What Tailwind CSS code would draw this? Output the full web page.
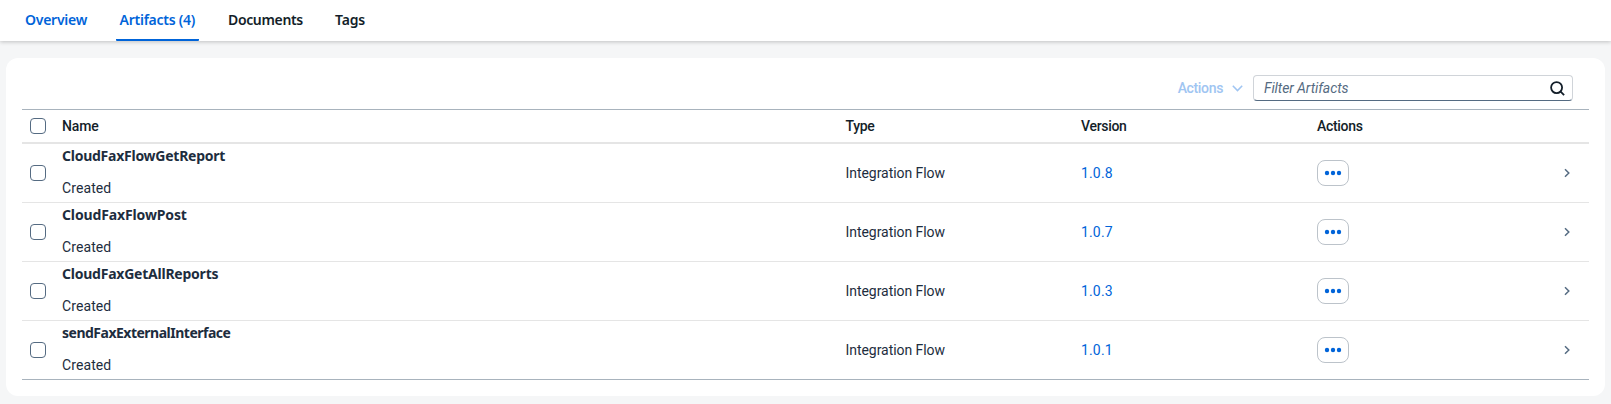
<!DOCTYPE html>
<html lang="en">
<head>
<meta charset="utf-8">
<title>Artifacts</title>
<script src="https://cdn.jsdelivr.net/npm/@tailwindcss/browser@4"></script>
</head>
<body class="h-[404px] overflow-hidden bg-[#f5f6f7] font-[Roboto,sans-serif] text-sm leading-5 text-[#1d2d3e]">
<svg class="hidden">
  <symbol id="dots" viewBox="0 0 18 6"><circle cx="3" cy="3" r="2.2"/><circle cx="9" cy="3" r="2.2"/><circle cx="15" cy="3" r="2.2"/></symbol>
  <symbol id="next" viewBox="0 0 6 10"><path d="M1 1.2 4.8 5 1 8.8" fill="none" stroke="currentColor" stroke-width="1.5"/></symbol>
</svg>
<nav class="relative flex h-[41px] items-stretch bg-white pl-[25px] font-['Noto_Sans',sans-serif] font-semibold shadow-[0_1px_4px_rgba(0,0,0,0.22)]">
  <a class="w-[91px] pt-[10px] tracking-[-0.25px] text-[#0064d9]">Overview</a>
  <a class="w-[83px] rounded-b-[1px] border-b-2 border-[#0064d9] pl-[3.5px] pt-[10px] tracking-[-0.25px] text-[#0064d9]">Artifacts (4)</a>
  <a class="ml-[29px] w-[107px] pt-[10px] tracking-[-0.35px] text-[#131e29]">Documents</a>
  <a class="pt-[10px] tracking-[-0.2px] text-[#131e29]">Tags</a>
</nav>
<main class="mx-[6px] mt-[17px] h-[338px] rounded-xl bg-white px-4">
  <div class="flex h-[51px] items-start justify-end pr-4 pt-[17px]">
    <button class="mr-[10px] mt-[3px] flex items-center gap-[9px] font-medium tracking-[-0.35px] text-[#a0c5f2]"><span>Actions</span>
      <svg class="h-[7px] w-[11px]" viewBox="0 0 11 7"><path d="M.8.8 5.5 5.6 10.2.8" fill="none" stroke="currentColor" stroke-width="1.5"/></svg></button>
    <div class="flex h-[26px] w-80 items-center justify-between rounded border border-[#d0d4d9] border-b-[#556b82] pl-[10px] pr-[7.5px]">
      <span class="italic tracking-[-0.1px] text-[#556b82]">Filter Artifacts</span>
      <svg class="size-[15px] text-[#131e29]" viewBox="0 0 15 15" fill="none" stroke="currentColor" stroke-width="1.8"><circle cx="6.6" cy="6.6" r="5.5"/><path d="m10.4 10.4 3.7 3.7"/></svg>
    </div>
  </div>
  <div class="border-y border-[#a8b3bd]">
    <div class="grid h-[34px] grid-cols-[40px_783.5px_235.5px_236px_1fr] items-center border-b-2 border-[#e5e5e5] font-medium tracking-[-0.3px] text-[#131e29]">
      <i class="ml-2 size-4 rounded border border-[#556b82]"></i><span class="tracking-[-0.1px]">Name</span><span>Type</span><span>Version</span><span>Actions</span>
    </div>
    <div id="rows"></div>
  </div>
</main>
<script>
const rows = [
  ["CloudFaxFlowGetReport","1.0.8","tracking-[-0.25px]"],
  ["CloudFaxFlowPost","1.0.7","tracking-[-0.13px]"],
  ["CloudFaxGetAllReports","1.0.3","tracking-[-0.23px]"],
  ["sendFaxExternalInterface","1.0.1","tracking-[-0.5px]"]
];
document.getElementById("rows").innerHTML = rows.map(([n,v,spacing]) => `
<div class="grid h-[59px] grid-cols-[40px_783.5px_235.5px_236px_1fr] items-center border-b border-[#e5e5e5] last:h-[58px] last:border-b-0">
  <i class="ml-2 size-4 rounded border border-[#556b82]"></i>
  <div class="flex h-[58px] flex-col gap-3 pt-[2px]"><span class="h-5 font-['Noto_Sans',sans-serif] font-bold ${spacing}">${n}</span><span class="tracking-[0.1px]">Created</span></div>
  <span class="tracking-[-0.05px]">Integration Flow</span><a class="tracking-[0.15px] text-[#0064d9]">${v}</a>
  <div class="flex items-center justify-between pr-[19px]">
    <button class="flex h-[26px] w-8 items-center justify-center rounded-lg border border-[#bcc3ca] text-[#0064d9]"><svg class="h-[6px] w-[18px] fill-current"><use href="#dots"/></svg></button>
    <svg class="h-[10px] w-[6px] text-[#556b82]"><use href="#next"/></svg>
  </div>
</div>`).join("");
</script>
</body>
</html>
